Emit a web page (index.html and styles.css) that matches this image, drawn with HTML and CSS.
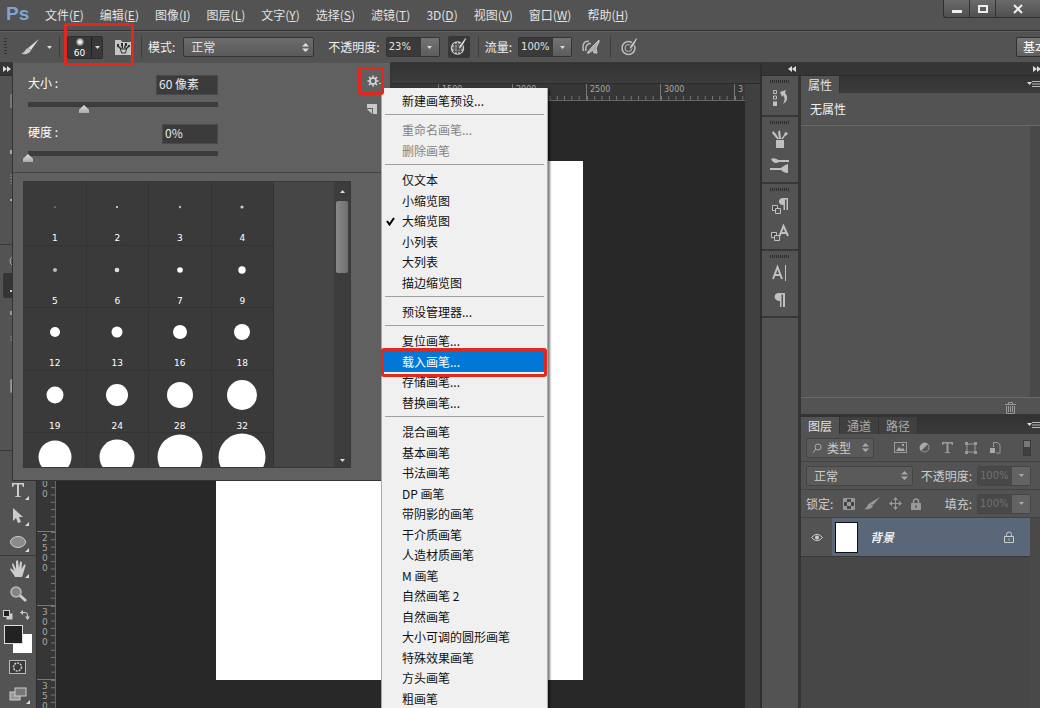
FILE: index.html
```
<!DOCTYPE html>
<html lang="zh-CN">
<head>
<meta charset="utf-8">
<title>Ps</title>
<link rel="stylesheet" href="styles.css">
</head>
<body>
<header class="menubar">
  <span class="logo">Ps</span>
  <nav class="menus">
    <button>文件(<u>F</u>)</button><button>编辑(<u>E</u>)</button><button>图像(<u>I</u>)</button><button>图层(<u>L</u>)</button><button>文字(<u>Y</u>)</button><button>选择(<u>S</u>)</button><button>滤镜(<u>T</u>)</button><button>3D(<u>D</u>)</button><button>视图(<u>V</u>)</button><button>窗口(<u>W</u>)</button><button>帮助(<u>H</u>)</button>
  </nav>
  <div class="window-controls">
    <button aria-label="最小化"><svg width="12" height="12"><rect x="1" y="7" width="10" height="3" fill="#eee"/></svg></button>
    <button aria-label="最大化"><svg width="12" height="12"><rect x="2" y="3" width="8" height="6" fill="none" stroke="#eee" stroke-width="2"/></svg></button>
    <button class="close" aria-label="关闭"><svg width="12" height="12"><path d="M2 2l8 8M10 2l-8 8" stroke="#eee" stroke-width="2"/></svg></button>
  </div>
</header>

<div class="options">
  <span class="grip-v"></span>
  <button class="tool-pick" aria-label="画笔工具">
    <svg width="20" height="18" viewBox="0 0 20 18"><path d="M19 1L11 12L8 10Z" fill="#ddd"/><path d="M8 10L11 12.500C9 16 5 17 1 15.500C5 15 5 11 8 10Z" fill="#c8c8c8"/></svg>
    <svg class="caret" width="5" height="3"><path d="M0 0h5L2.500 3z"/></svg>
  </button>
  <span class="divider"></span>
  <button class="brush-pick" aria-label="画笔预设">
    <span class="brush-size"><i class="soft-dot"></i>60</span>
    <span class="brush-drop"><svg class="caret" width="5" height="3"><path d="M0 0h5L2.500 3z"/></svg></span>
  </button>
  <button class="folder" aria-label="画笔面板"><svg width="17" height="17" viewBox="0 0 17 17"><path d="M0 1h6l1 2h9v13H0z" fill="#c4c4c4"/><path d="M5.500 10h6l-1 4h-4z" fill="#c4c4c4" stroke="#333"/><path d="M6 10L3 7M7.500 9.500L7 6M9.500 9.500L10.500 6M11 10l3-3" stroke="#333" stroke-width="1.500"/><path d="M2 5h2v3H2zM6 4h2v3H6zM10 4h2v3h-2zM13 6h2v2h-2z" fill="#333"/></svg></button>
  <span class="divider"></span>
  <label for="mode">模式:</label>
  <span class="select mode"><select id="mode"><option>正常</option></select><svg width="7" height="9"><path d="M0 3.500L3.500 0 7 3.500zM0 5.500L3.500 9 7 5.500z"/></svg></span>
  <label for="opacity">不透明度:</label>
  <span class="combo"><input id="opacity" value="23%"><button aria-label="不透明度选项"><svg class="caret" width="5" height="3"><path d="M0 0h5L2.500 3z"/></svg></button></span>
  <button class="icon pressed" aria-label="不透明度压力"><svg width="18" height="18" viewBox="0 0 18 18"><circle cx="7.500" cy="10" r="6" fill="#888" stroke="#ccc" stroke-width="1.500"/><path d="M3 6.500h9M2 10h11M3 13.500h9M4.500 5v10M7.500 4v12M10.500 5v10" stroke="#555"/><path d="M17 0l-5 9-4 3 1-4 6-8z" fill="#ddd" stroke="#444"/></svg></button>
  <span class="divider"></span>
  <label for="flow">流量:</label>
  <span class="combo"><input id="flow" value="100%"><button aria-label="流量选项"><svg class="caret" width="5" height="3"><path d="M0 0h5L2.500 3z"/></svg></button></span>
  <button class="icon" aria-label="喷枪"><svg width="18" height="16" viewBox="0 0 18 16"><path d="M7 2.500C2 1 0 6 1.500 12M9 4.500C5 4 3 8 4 12" fill="none" stroke="#bbb" stroke-width="1.500"/><path d="M17 1l-6 6-6 7 2 0 4-3 1 3h3l-1-5 3-6z" fill="#aaa" stroke="#ccc"/></svg></button>
  <span class="divider"></span>
  <button class="icon" aria-label="大小压力"><svg width="18" height="18" viewBox="0 0 18 18"><circle cx="7.500" cy="10" r="6.500" fill="none" stroke="#bbb" stroke-width="1.500"/><circle cx="7.500" cy="10" r="3.500" fill="none" stroke="#bbb"/><path d="M17 0l-5 9-4 3 1-4 6-8z" fill="#ccc" stroke="#555"/></svg></button>
  <button class="workspace-name">基本功能</button>
</div>

<main class="workspace">
  <aside class="tools">
    <div class="dock-head"><svg width="8" height="6"><path d="M0 0l4 3-4 3zM4 0l4 3-4 3z"/></svg></div>
    <div class="tool-group first">
      <button aria-label="移动"><svg width="18" height="16"><rect x="2" y="2" width="14" height="12" fill="none" stroke="#999"/></svg></button>
      <button aria-label="选框"></button>
      <button aria-label="套索"><svg width="18" height="16"><path d="M1 5h3v4H1z" fill="#aaa"/></svg></button>
      <button aria-label="快速选择"><svg width="18" height="16"><path d="M2 3v10" stroke="#888" stroke-dasharray="2 1"/></svg></button>
      <button aria-label="裁剪"><svg width="18" height="16"><path d="M1 2h3v2H1z" fill="#aaa"/></svg></button>
      <button aria-label="吸管"></button>
    </div>
    <div class="tool-group tight">
      <button aria-label="修复画笔"><svg width="18" height="16"><ellipse cx="9" cy="8" rx="8" ry="6" fill="none" stroke="#aaa"/></svg></button>
      <button class="active" aria-label="画笔"><svg width="18" height="16"><path d="M1 13h4L16 2" stroke="#ccc" stroke-width="2" fill="none"/></svg></button>
      <button aria-label="仿制图章"><svg width="18" height="16"><path d="M1 8h15v4H1z" fill="#999"/></svg></button>
      <button aria-label="历史记录画笔"><svg width="18" height="16"><path d="M1 9h3M1 12h3" stroke="#888"/></svg></button>
      <button aria-label="橡皮擦"></button>
      <button aria-label="渐变"><svg width="18" height="16"><rect x="2" y="2" width="14" height="12" fill="#777" stroke="#bbb"/></svg></button>
      <button aria-label="模糊"></button>
      <button aria-label="减淡"></button>
    </div>
    <div class="tool-group">
      <button aria-label="钢笔"><svg width="18" height="16"><path d="M3 15L6 7l4-5 5 5-6 6z" fill="#ccc"/></svg></button>
      <button class="more" aria-label="文字"><svg width="18" height="16" viewBox="0 0 18 16"><path d="M3 1h12v4h-1l-1-2.500h-3V14l2 .5V15H6v-.5l2-.5V2.500H5L4 5H3z" fill="#ccc"/></svg></button>
      <button class="more" aria-label="路径选择"><svg width="18" height="16" viewBox="0 0 18 16"><path d="M4 0v13l3-3 2 5 3-1-2-5h4z" fill="#ccc"/></svg></button>
      <button class="more" aria-label="椭圆"><svg width="18" height="16" viewBox="0 0 18 16"><ellipse cx="9" cy="8" rx="7.500" ry="5.500" fill="#8b8b8b" stroke="#ccc"/></svg></button>
    </div>
    <div class="tool-group tight last">
      <button class="more" aria-label="抓手"><svg width="18" height="18" viewBox="0 0 18 18"><path d="M6 17c-1-3-4-5-5-8 1-1 2 0 4 2L3 4c1-1 2 0 2 1l2 4V1c1-1 2-1 2 0l1 7 1-6c1-1 2 0 2 1l-.5 6L15 5c1-1 2 0 1.500 1L14 14l-1 3z" fill="#ccc"/></svg></button>
      <button aria-label="缩放"><svg width="18" height="18" viewBox="0 0 18 18"><circle cx="7" cy="7" r="5" fill="#858585" stroke="#bbb" stroke-width="1.500"/><path d="M11 10.500l6 5.500" stroke="#ccc" stroke-width="3"/></svg></button>
    </div>
    <div class="color-tools">
      <svg width="10" height="10"><rect x="3.500" y="3.500" width="6" height="6" fill="#ccc"/><rect x=".5" y=".5" width="6" height="6" fill="#222" stroke="#ccc"/></svg>
      <svg width="10" height="10"><path d="M3 2.500h2q2.500 0 2.500 2.500v2" fill="none" stroke="#ccc"/><path d="M3 0L0 2.500 3 5zM5 6.500h5L7.500 10z" fill="#ccc"/></svg>
    </div>
    <div class="swatches"><button class="bg" aria-label="背景色"></button><button class="fg" aria-label="前景色"></button></div>
    <button class="mode-btn" aria-label="快速蒙版"><svg width="18" height="14"><rect x=".5" y=".5" width="16" height="13" fill="#3a3a3a" stroke="#bbb"/><circle cx="8.500" cy="7" r="4" fill="none" stroke="#ccc" stroke-width="1.500" stroke-dasharray="2 1"/></svg></button>
    <button class="mode-btn more" aria-label="屏幕模式"><svg width="18" height="14"><rect x="1" y="5" width="10" height="8" fill="#999" stroke="#ccc"/><rect x="6" y="1" width="11" height="8" fill="#777" stroke="#ccc"/></svg></button>
  </aside>

  <section class="document">
    <div class="doc-tabs"></div>
    <div class="doc-body">
      <div class="ruler-left">
        <span class="v-seg"></span><span class="v-seg"></span><span class="v-seg"></span><span class="v-seg"></span><span class="v-seg"></span><span class="v-seg">2<br>0<br>0<br>0</span><span class="v-seg">2<br>5<br>0<br>0</span><span class="v-seg">3<br>0<br>0<br>0</span><span class="v-seg">3<br>5<br>0<br>0</span>
      </div>
      <div class="doc-main">
        <div class="ruler-top"><span class="h-seg"></span><span class="h-seg"></span><span class="h-seg"></span><span class="h-seg"></span><span class="h-seg"></span><span class="h-seg">1500</span><span class="h-seg">2000</span><span class="h-seg">2500</span><span class="h-seg">3000</span><span class="h-seg">3</span></div>
        <div class="canvas"><div class="page"></div></div>
      </div>
      <div class="doc-scroll"></div>
    </div>
  </section>

  <aside class="docks">
    <div class="dock-head wide"><svg width="8" height="6"><path d="M4 0L0 3l4 3zM8 0L4 3l4 3z"/></svg><svg width="8" height="6"><path d="M0 0l4 3-4 3zM4 0l4 3-4 3z"/></svg></div>
    <div class="dock-cols">
      <div class="icon-dock">
        <div class="dock-group single"><i class="grip-h"></i>
          <button aria-label="历史记录"><svg width="18" height="18" viewBox="0 0 18 18"><path d="M2.500 1.500h3v3h-3zM2.500 7h3v3h-3z" fill="none" stroke="#c0c0c0"/><path d="M2 12.500h4V17H2z" fill="#c0c0c0"/><path d="M9 3l6-2-1 3c4 4 2 9-2 11 2-4 2-6 0-9l-1 2z" fill="#c0c0c0"/></svg></button></div>
        <div class="dock-group"><i class="grip-h"></i>
          <button aria-label="画笔预设"><svg width="18" height="18" viewBox="0 0 18 18"><path d="M5 10h8v8H5zM6 9L1 3l1-2 3 3 3 5zM8 9L7 2l2-2 1 9zM10 9l3-4 1-3 3 1-1 2-2 1-2 3z" fill="#c0c0c0"/></svg></button>
          <button aria-label="画笔"><svg width="20" height="18" viewBox="0 0 20 18"><path d="M1 2c4-2 6 1 8 1h10v2H9C6 7 3 6 1 2zM0 11h11c2-2 4-3 7-4v9c-3 0-5-1-7-3H0z" fill="#c0c0c0"/></svg></button></div>
        <div class="dock-group"><i class="grip-h"></i>
          <button aria-label="段落样式"><svg width="18" height="18" viewBox="0 0 18 18"><path d="M1.500 8.500h5v5h-5z" fill="#444" stroke="#c0c0c0"/><path d="M4.500 11.500h5v5h-5z" fill="#555" stroke="#c0c0c0"/><path d="M17 1v12h-1.500V2.500H14V13h-1.500V8C6 8 7 1 12 1z" fill="#c0c0c0"/></svg></button>
          <button aria-label="字符样式"><svg width="18" height="18" viewBox="0 0 18 18"><path d="M.5 8.500h5v5h-5z" fill="#444" stroke="#c0c0c0"/><path d="M3.500 11.500h5v5h-5z" fill="#555" stroke="#c0c0c0"/><path d="M8.500 12L12.500 2 17 12M10 9h5.500" fill="none" stroke="#c0c0c0" stroke-width="2"/></svg></button></div>
        <div class="dock-group"><i class="grip-h"></i>
          <button aria-label="字符"><svg width="18" height="18" viewBox="0 0 18 18"><path d="M2 15L6.500 3 11 15M3.500 11H10" fill="none" stroke="#c0c0c0" stroke-width="2"/><path d="M14.500 1v16" stroke="#c0c0c0"/></svg></button>
          <button aria-label="段落"><svg width="18" height="18" viewBox="0 0 18 18"><path d="M14 2v14h-2V3.500h-1.500V16H9V10C2 10 2 2 8 2z" fill="#c0c0c0"/></svg></button></div>
      </div>
      <div class="panels">
        <section class="props">
          <div class="tabs"><button class="on">属性</button><span class="panel-menu"><svg width="13" height="8"><path d="M0 1h5L2.500 4z"/><path d="M5 .5h8M5 3h8M5 5.500h8" stroke="#bbb"/></svg></span></div>
          <p class="no-props">无属性</p>
          <div class="props-body"></div>
          <div class="props-foot"><button aria-label="删除"><svg width="11" height="12" viewBox="0 0 11 12"><path d="M0 2.500h11M3.500 2V.5h4V2M1.500 4v7.500h8V4M3.500 4v6M5.500 4v6M7.500 4v6" fill="none" stroke="#999"/></svg></button></div>
        </section>
        <section class="layers">
          <div class="tabs"><button class="on">图层</button><button>通道</button><button>路径</button><span class="panel-menu"><svg width="13" height="8"><path d="M0 1h5L2.500 4z"/><path d="M5 .5h8M5 3h8M5 5.500h8" stroke="#bbb"/></svg></span></div>
          <div class="lrow">
            <span class="select kind"><svg class="lens" width="10" height="10"><circle cx="6" cy="4" r="3" fill="none" stroke="#aaa"/><path d="M4 6L1 9.500" stroke="#aaa"/></svg><select aria-label="类型"><option>类型</option></select><svg width="7" height="9"><path d="M0 3.500L3.500 0 7 3.500zM0 5.500L3.500 9 7 5.500z"/></svg></span>
            <div class="filters">
              <button aria-label="像素图层"><svg width="13" height="11"><rect x=".5" y=".5" width="12" height="10" fill="#555" stroke="#999"/><path d="M2 9l3-4 2 2 2-1 2 3z" fill="#aaa"/><rect x="8" y="2" width="2" height="2" fill="#aaa"/></svg></button>
              <button aria-label="调整图层"><svg width="11" height="11"><circle cx="5.500" cy="5.500" r="4.500" fill="#555" stroke="#999"/><path d="M2 9A5 5 0 0 1 9 2z" fill="#aaa"/></svg></button>
              <button aria-label="文字图层"><svg width="11" height="11"><path d="M0 0h11v3h-1L9 1.500H6.500V10H8v1H3v-1h1.500V1.500H2L1 3H0z" fill="#999"/></svg></button>
              <button aria-label="形状图层"><svg width="12" height="12"><path d="M2 2h8v8H2z" fill="none" stroke="#999"/><path d="M0 0h3v3H0zM9 0h3v3H9zM0 9h3v3H0zM9 9h3v3H9z" fill="#999"/></svg></button>
              <button aria-label="智能对象"><svg width="12" height="12"><path d="M4.500 5V.5h4L11 3v8H7" fill="none" stroke="#999"/><path d="M1 6h5v5H1z" fill="#aaa"/></svg></button>
            </div>
            <span class="toggle"></span>
          </div>
          <div class="lrow">
            <span class="select blend"><select aria-label="混合模式"><option>正常</option></select><svg width="7" height="9"><path d="M0 3.500L3.500 0 7 3.500zM0 5.500L3.500 9 7 5.500z"/></svg></span>
            <label for="lop">不透明度:</label>
            <span class="combo dim"><input id="lop" value="100%"><button aria-label="选项"><svg class="caret" width="5" height="3"><path d="M0 0h5L2.500 3z"/></svg></button></span>
          </div>
          <div class="lrow lock-row">
            <span>锁定:</span>
            <div class="locks">
              <button aria-label="透明像素"><svg width="12" height="12"><path d="M.5.500h11v11H.5z" fill="#444" stroke="#999"/><path d="M1 1h3v3H1zM8 1h3v3H8zM4 4h4v4H4zM1 8h3v3H1zM8 8h3v3H8z" fill="#999"/></svg></button>
              <button aria-label="图像像素"><svg width="16" height="13"><path d="M16 0L9 8 6 6zM6 6l3 3c-2 3-5 4-9 3 4-1 3-5 6-6z" fill="#999"/></svg></button>
              <button aria-label="位置"><svg width="13" height="13"><path d="M6.500 2v9M2 6.500h9" stroke="#999"/><path d="M6.500 0L9 3H4zM6.500 13L9 10H4zM0 6.500L3 4v5zM13 6.500L10 4v5z" fill="#999"/></svg></button>
              <button aria-label="全部"><svg width="10" height="12"><path d="M2.500 5V3.500a2.500 2.500 0 0 1 5 0V5" fill="none" stroke="#999" stroke-width="1.500"/><path d="M0 5h10v7H0z" fill="#999"/><path d="M5 7v3" stroke="#444"/></svg></button>
            </div>
            <label for="fill">填充:</label>
            <span class="combo dim"><input id="fill" value="100%"><button aria-label="选项"><svg class="caret" width="5" height="3"><path d="M0 0h5L2.500 3z"/></svg></button></span>
          </div>
          <div class="layer-list">
            <div class="layer">
              <button class="eye" aria-label="可见"><svg width="12" height="9"><path d="M.5 4.500Q6-2 11.500 4.500Q6 11 .5 4.500z" fill="#555" stroke="#ccc"/><circle cx="6" cy="4.500" r="2" fill="#ccc"/></svg></button>
              <div class="layer-main"><span class="thumb"></span><em>背景</em><svg width="10" height="12"><path d="M2.500 5V3.500a2.500 2.500 0 0 1 5 0V5M.5 5.500h9v6h-9zM5 7.500v2" fill="none" stroke="#ccc"/></svg></div>
            </div>
          </div>
        </section>
      </div>
    </div>
  </aside>
</main>

<section class="brush-panel">
  <div class="brush-settings">
    <div class="setting">
      <div class="setting-line"><label for="size">大小 :</label><input class="value" id="size" value="60 像素"></div>
      <input type="range" aria-label="大小" min="0" max="190" value="56">
    </div>
    <div class="setting">
      <div class="setting-line"><label for="hard">硬度 :</label><input class="value small" id="hard" value="0%"></div>
      <input type="range" aria-label="硬度" min="0" max="190" value="0">
    </div>
    <div class="panel-actions">
      <button aria-label="面板选项"><svg width="14" height="12" viewBox="0 0 14 12"><circle cx="6" cy="6" r="3" fill="none" stroke="#ddd" stroke-width="1.500"/><path d="M6 .5v2M6 9.500v2M.5 6h2M9.500 6h2M2 2l1.500 1.500M8.500 8.500L10 10M10 2L8.500 3.500M2 10l1.500-1.500" stroke="#ddd" stroke-width="1.500"/><path d="M12 8h2v1h-2z" fill="#ccc"/></svg></button>
      <button aria-label="新建预设"><svg width="14" height="10"><path d="M0 0h10v10H6V4H0z" fill="#c8c8c8"/><path d="M0 5h5v5z" fill="#c8c8c8"/></svg></button>
    </div>
  </div>
  <div class="brush-list">
    <div class="brush-grid">
      <button><svg width="62" height="48"><circle cx="31" cy="24" r=".6"/></svg>1</button>
      <button><svg width="62" height="48"><circle cx="31" cy="24" r=".9"/></svg>2</button>
      <button><svg width="62" height="48"><circle cx="31" cy="24" r="1.200" fill="#bbb"/></svg>3</button>
      <button><svg width="62" height="48"><circle cx="31" cy="24" r="1.600" fill="#ccc"/></svg>4</button>
      <button><svg width="62" height="48"><circle cx="31" cy="24" r="2" fill="#bbb"/></svg>5</button>
      <button><svg width="62" height="48"><circle cx="31" cy="24" r="2.300" fill="#ddd"/></svg>6</button>
      <button><svg width="62" height="48"><circle cx="31" cy="24" r="2.800"/></svg>7</button>
      <button><svg width="62" height="48"><circle cx="31" cy="24" r="3.700"/></svg>9</button>
      <button><svg width="62" height="48"><circle cx="31" cy="24" r="5"/></svg>12</button>
      <button><svg width="62" height="48"><circle cx="31" cy="24" r="5.500"/></svg>13</button>
      <button><svg width="62" height="48"><circle cx="31" cy="24" r="7"/></svg>16</button>
      <button><svg width="62" height="48"><circle cx="31" cy="24" r="8"/></svg>18</button>
      <button><svg width="62" height="48"><circle cx="31" cy="24" r="8.500"/></svg>19</button>
      <button><svg width="62" height="48"><circle cx="31" cy="24" r="11"/></svg>24</button>
      <button><svg width="62" height="48"><circle cx="31" cy="24" r="13"/></svg>28</button>
      <button><svg width="62" height="48"><circle cx="31" cy="24" r="15"/></svg>32</button>
      <button aria-label="37"><svg width="62" height="48"><circle cx="31" cy="24" r="16.500"/></svg></button>
      <button aria-label="39"><svg width="62" height="48"><circle cx="31" cy="24" r="17.500"/></svg></button>
      <button aria-label="46"><svg width="62" height="48"><circle cx="31" cy="24" r="22.500"/></svg></button>
      <button aria-label="59"><svg width="62" height="48"><circle cx="31" cy="24" r="23.500"/></svg></button>
    </div>
    <div class="brush-scroll"><svg width="5" height="3"><path d="M0 3h5L2.500 0z"/></svg><i class="scroll-thumb"></i><svg width="5" height="3"><path d="M0 0h5L2.500 3z"/></svg></div>
  </div>
</section>

<div class="menu" role="menu">
  <div class="menu-group"><button role="menuitem">新建画笔预设...</button></div>
  <div class="menu-group"><button role="menuitem" disabled>重命名画笔...</button><button role="menuitem" disabled>删除画笔</button></div>
  <div class="menu-group"><button role="menuitem">仅文本</button><button role="menuitem">小缩览图</button><button role="menuitem"><svg class="check" width="9" height="9"><path d="M1 4l2.500 3.500L8 1" fill="none" stroke="#000" stroke-width="2"/></svg>大缩览图</button><button role="menuitem">小列表</button><button role="menuitem">大列表</button><button role="menuitem">描边缩览图</button></div>
  <div class="menu-group"><button role="menuitem">预设管理器...</button></div>
  <div class="menu-group"><button role="menuitem">复位画笔...</button><button role="menuitem" class="hot">载入画笔...</button><button role="menuitem">存储画笔...</button><button role="menuitem">替换画笔...</button></div>
  <div class="menu-group"><button role="menuitem">混合画笔</button><button role="menuitem">基本画笔</button><button role="menuitem">书法画笔</button><button role="menuitem">DP 画笔</button><button role="menuitem">带阴影的画笔</button><button role="menuitem">干介质画笔</button><button role="menuitem">人造材质画笔</button><button role="menuitem">M 画笔</button><button role="menuitem">自然画笔 2</button><button role="menuitem">自然画笔</button><button role="menuitem">大小可调的圆形画笔</button><button role="menuitem">特殊效果画笔</button><button role="menuitem">方头画笔</button><button role="menuitem">粗画笔</button></div>
</div>

<span class="mark mark-brush"></span>
<span class="mark mark-gear"></span>
<span class="mark mark-load"></span>
</body>
</html>
```

FILE: styles.css
```
* { box-sizing: border-box; }
html, body { height: 100%; }
body {
  margin: 0;
  display: flex;
  flex-direction: column;
  position: relative;
  overflow: hidden;
  background: #535353;
  color: #e2e2e2;
  font: 12px/16px "Noto Sans CJK SC", sans-serif;
}
button, input, select { font: inherit; color: inherit; }
button { border: 0; padding: 0; background: none; }
svg { display: block; flex: none; }
.caret, .select svg, .dock-head svg, .panel-menu svg, .brush-scroll svg { fill: #ddd; }

/* menu bar */
.menubar { display: flex; height: 31px; flex: none; border-bottom: 1px solid #303030; overflow: hidden; }
.logo { width: 45px; padding-left: 6px; font: bold 19px/28px "Liberation Sans", sans-serif; color: #7ea6d3; }
.menus { display: flex; gap: 16px; align-items: center; white-space: nowrap; }
.window-controls { display: flex; margin-left: auto; height: 18px; border: solid #303030; border-width: 0 0 1px 1px; border-radius: 0 0 0 3px; background: linear-gradient(#6a6a6a, #505050); }
.window-controls button { width: 26px; display: grid; place-items: center; border-right: 1px solid #333; }
.window-controls .close { width: 44px; border: 0; }

/* options bar */
.options { display: flex; align-items: center; height: 32px; flex: none; padding-left: 4px; border-top: 1px solid #646464; border-bottom: 1px solid #383838; overflow: hidden; white-space: nowrap; }
.grip-v { width: 3px; height: 18px; margin-right: 13px; background: repeating-linear-gradient(#333 0 1px, #535353 1px 3px); }
.tool-pick { display: flex; align-items: center; gap: 7px; margin-right: 7px; }
.divider { width: 1px; height: 22px; background: #3e3e3e; flex: none; }
.brush-pick { display: flex; width: 36px; height: 23px; margin: 0 12px 0 7px; background: #383838; border: 1px solid #2e2e2e; border-radius: 2px; }
.brush-size { width: 24px; border-right: 1px solid #222; font: 9px/10px "DejaVu Sans", sans-serif; text-align: center; color: #fff; }
.soft-dot { display: block; width: 8px; height: 8px; margin: 1px auto 2px; border-radius: 50%; background: radial-gradient(#fff 10%, #aaa 50%, #383838 80%); }
.brush-drop { flex: 1; display: grid; place-items: center; }
.folder { margin-right: 9px; }
.options label { margin-left: 6px; color: #f0f0f0; }
.select { display: flex; align-items: center; padding-right: 4px; border: 1px solid #353535; border-radius: 2px; background: linear-gradient(#6c6c6c, #5a5a5a); height: 20px; }
.select select { appearance: none; flex: 1; min-width: 0; border: 0; background: none; padding: 0 0 0 7px; height: 18px; }
.mode { width: 131px; margin: 0 8px 0 8px; }
.combo { display: flex; width: 54px; height: 20px; margin-left: 6px; border: 1px solid #333; border-radius: 2px; flex: none; }
.combo input { flex: 1; min-width: 0; border: 0; padding: 0 0 0 2px; background: #3a3a3a; font: 10px/16px "DejaVu Sans", sans-serif; }
.combo button { width: 18px; display: grid; place-items: center; background: linear-gradient(#747474, #5c5c5c); }
.icon { width: 22px; height: 22px; margin: 0 8px; display: grid; place-items: center; }
.icon.pressed { background: #383838; border-radius: 2px; }
.workspace-name { margin-left: auto; margin-right: -33px; width: 57px; height: 20px; border: 1px solid #303030; border-radius: 2px; background: linear-gradient(#777, #606060); color: #fff; text-align: left; padding-left: 6px; }

.workspace { display: flex; flex: 1; min-height: 0; }
.dock-head { height: 13px; flex: none; display: flex; align-items: center; padding-left: 3px; background: #353535; border-bottom: 1px solid #2c2c2c; }
.dock-head.wide { justify-content: space-between; padding-left: 26px; margin-right: -1px; }

/* toolbox */
.tools { width: 37px; flex: none; display: flex; flex-direction: column; border-right: 1px solid #2e2e2e; overflow: hidden; }
.tool-group { display: flex; flex-direction: column; border-bottom: 1px solid #393939; flex: none; }
.tool-group button { height: 26px; margin-left: 3px; padding-left: 6px; display: flex; align-items: center; position: relative; width: 30px; }
.tool-group.first { padding-top: 12px; }
.tool-group.tight { padding: 3px 0 2px; }
.tool-group.tight button { height: 25px; }
.tool-group.last { padding: 0; border: 0; }
.tool-group .active { background: #353535; border-radius: 2px; }
.more { position: relative; }
.more::after { content: ""; position: absolute; right: 6px; bottom: 3px; border: 2px solid; border-color: transparent #ddd #ddd transparent; }
.tool-group .more::after { right: 4px; }
.color-tools { display: flex; justify-content: space-between; padding: 4px 6px 0 3px; height: 19px; flex: none; }
.swatches { display: grid; grid-template-columns: 9px 10px 9px; grid-template-rows: 9px 10px 9px; margin-left: 4px; flex: none; }
.fg { grid-area: 1 / 1 / 3 / 3; background: #222; border: 1px solid #ddd; }
.bg { grid-area: 2 / 2 / 4 / 4; background: #fff; }
.mode-btn { height: 27px; flex: none; padding-left: 9px; display: flex; align-items: center; }

/* document */
.document { flex: 1; min-width: 0; display: flex; flex-direction: column; border-right: 2px solid #2e2e2e; }
.doc-tabs { height: 21px; flex: none; background: linear-gradient(#333, #3d3d3d); border-bottom: 1px solid #2c2c2c; }
.doc-body { flex: 1; min-height: 0; display: flex; }
.ruler-left { width: 19px; flex: none; background: #363636; border-right: 1px solid #666; overflow: hidden; padding-top: 3px; }
.v-seg { display: block; height: 74px; padding: 1px 0 0 5px; border-top: 1px solid #777; font: 9px/10px "DejaVu Sans", sans-serif; color: #a5a5a5; background: linear-gradient(#777 1px, transparent 1px) right top / 4px 10% repeat-y; }
.doc-main { flex: 1; min-width: 0; display: flex; flex-direction: column; }
.ruler-top { height: 17px; flex: none; display: flex; overflow: hidden; padding-left: 12px; background: #363636; border-bottom: 1px solid #666; }
.h-seg { width: 74px; flex: none; padding-left: 3px; border-left: 1px solid #777; font: 8px/12px "DejaVu Sans", sans-serif; color: #a5a5a5; background: linear-gradient(90deg, #777 1px, transparent 1px) left bottom / 10% 4px repeat-x; }
.canvas { flex: 1; min-height: 0; background: #282828; padding: 60px 0 0 160px; overflow: hidden; }
.page { width: 367px; height: 519px; background: #fff; }
.doc-scroll { width: 15px; flex: none; background: #404040; }

/* docks */
.docks { width: 278px; flex: none; display: flex; flex-direction: column; }
.dock-cols { flex: 1; min-height: 0; display: flex; }
.icon-dock { width: 39px; flex: none; border-right: 3px solid #353535; }
.dock-group { height: 67px; border-bottom: 2px solid #383838; display: flex; flex-direction: column; align-items: center; padding-top: 4px; }
.dock-group.single { height: 41px; }
.grip-h { width: 20px; height: 3px; margin-bottom: 6px; flex: none; background: repeating-linear-gradient(90deg, #2c2c2c 0 1px, #535353 1px 2px); }
.dock-group button { height: 18px; margin-bottom: 9px; }
.panels { flex: 1; min-width: 0; display: flex; flex-direction: column; }
.tabs { display: flex; height: 17px; flex: none; background: linear-gradient(#333, #3b3b3b); }
.tabs button { width: 39px; border-right: 1px solid #333; color: #aaa; background: #404040; }
.tabs .on { background: #535353; color: #e2e2e2; }
.panel-menu { margin: 5px 0 0 auto; }
.no-props { margin: 0; padding: 8px 9px; height: 33px; color: #f0f0f0; border-bottom: 1px solid #696969; }
.props-body { height: 271px; border-right: 10px solid #494949; }
.props-foot { height: 20px; padding: 3px 0 0 204px; border-top: 1px solid #6a6a6a; border-bottom: 3px solid #333; }
.layers { flex: 1; min-height: 0; display: flex; flex-direction: column; }
.lrow { display: flex; align-items: center; height: 28px; flex: none; padding: 0 9px 0 5px; border-bottom: 1px solid #434343; white-space: nowrap; color: #ccc; }
.lrow .select { border-color: #444; background: #5a5a5a; }
.lrow .select svg, .lrow .caret { fill: #aaa; }
.lrow .combo { margin: 0; border-color: #454545; }
.lrow .combo button { background: #636363; }
.kind { width: 68px; }
.lrow .select .lens { margin-left: 5px; fill: none; }
.kind select { padding-left: 5px; }
.blend { width: 107px; }
.lrow label { margin-left: auto; margin-right: 5px; }
.filters { display: flex; gap: 12px; margin-left: 20px; }
.toggle { width: 8px; height: 16px; margin-left: auto; border: 1px solid #3a3a3a; background: linear-gradient(#777 6px, #404040 6px); }
.dim input { color: #707070; background: #484848; }
.locks { display: flex; align-items: center; gap: 9px; margin-left: 10px; }
.layer-list { flex: 1; background: #474747; border-right: 10px solid #494949; }
.layer { display: flex; height: 39px; border-bottom: 1px solid #3a3a3a; background: #535353; }
.eye { width: 31px; display: grid; place-items: center; }
.layer-main { flex: 1; display: flex; align-items: center; padding: 0 16px 0 3px; background: #596779; }
.thumb { width: 23px; height: 31px; background: #fff; border: 1px solid #111; margin-right: 12px; }
.layer-main em { margin-right: auto; color: #fff; font-weight: 500; }

/* brush drop-down panel */
.brush-panel { position: absolute; left: 12px; top: 62px; width: 379px; height: 419px; background: #606060; border: 1px solid #333; border-top-color: #555; }
.brush-settings { position: relative; height: 110px; padding: 12px 0 0 10px; border-bottom: 1px solid #444; }
.setting { width: 200px; height: 49px; }
.setting-line { display: flex; justify-content: space-between; height: 20px; padding: 0 5px; color: #fff; }
.value { width: 62px; height: 20px; border: 1px solid #4a4a4a; background: #3b3b3b; padding: 0 2px 3px; color: #e8e8e8; }
.value.small { width: 56px; }
.setting input[type="range"] { appearance: none; display: block; width: 200px; height: 16px; margin: 5px 0 0; background: linear-gradient(#3c3c3c, #3c3c3c) center 2px / 190px 5px no-repeat; }
.setting input[type="range"]::-webkit-slider-thumb { appearance: none; width: 10px; height: 8px; margin-top: 2px; background: linear-gradient(#ddd, #aaa); clip-path: polygon(50% 0, 100% 60%, 100% 100%, 0 100%, 0 60%); }
.panel-actions { position: absolute; right: 9px; top: 12px; display: flex; flex-direction: column; gap: 17px; }
.brush-list { margin: 8px 0 0 10px; width: 328px; height: 287px; display: flex; justify-content: space-between; background: #464646; border: 1px solid #383838; overflow: hidden; }
.brush-grid { width: 250px; padding-top: 1px; display: grid; grid-template-columns: repeat(4, 1fr); grid-auto-rows: 63px 62px; background: #3a3a3a; }
.brush-grid button { border: solid #333; border-width: 0 1px 1px 0; font: 9px/15px "DejaVu Sans", sans-serif; color: #fff; display: flex; flex-direction: column; align-items: center; overflow: hidden; }
.brush-grid svg { fill: #fff; }
.brush-scroll { width: 16px; background: #3c3c3c; display: flex; flex-direction: column; align-items: center; padding: 8px 0 5px; }
.scroll-thumb { width: 12px; height: 72px; margin: 8px 0 auto; border-radius: 2px; background: linear-gradient(90deg, #888, #707070); }

/* pop-up menu */
.menu { position: absolute; left: 381px; top: 88px; width: 167px; padding: 3px 0; background: #f0f0f0; border: solid #aaa; border-width: 0 1px; box-shadow: 2px 2px 2px rgba(0, 0, 0, .5); color: #111; }
.menu-group + .menu-group { padding-top: 9px; background: linear-gradient(#a0a0a0, #a0a0a0) 3px 3px / 159px 1px no-repeat; }
.menu button { display: block; position: relative; width: 100%; height: 20px; padding-left: 20px; line-height: 20px; text-align: left; white-space: nowrap; }
.menu button:nth-child(even) { height: 21px; }
.menu button:disabled { color: #858585; }
.menu .hot { background: #0078d7; color: #fff; }
.check { position: absolute; left: 4px; top: 6px; }

/* highlight frames */
.mark { position: absolute; border: 3px solid #e0281e; border-radius: 3px; pointer-events: none; }
.mark-brush { left: 64px; top: 23px; width: 70px; height: 43px; }
.mark-gear { left: 358px; top: 67px; width: 26px; height: 28px; }
.mark-load { left: 381px; top: 348px; width: 166px; height: 29px; }
```
